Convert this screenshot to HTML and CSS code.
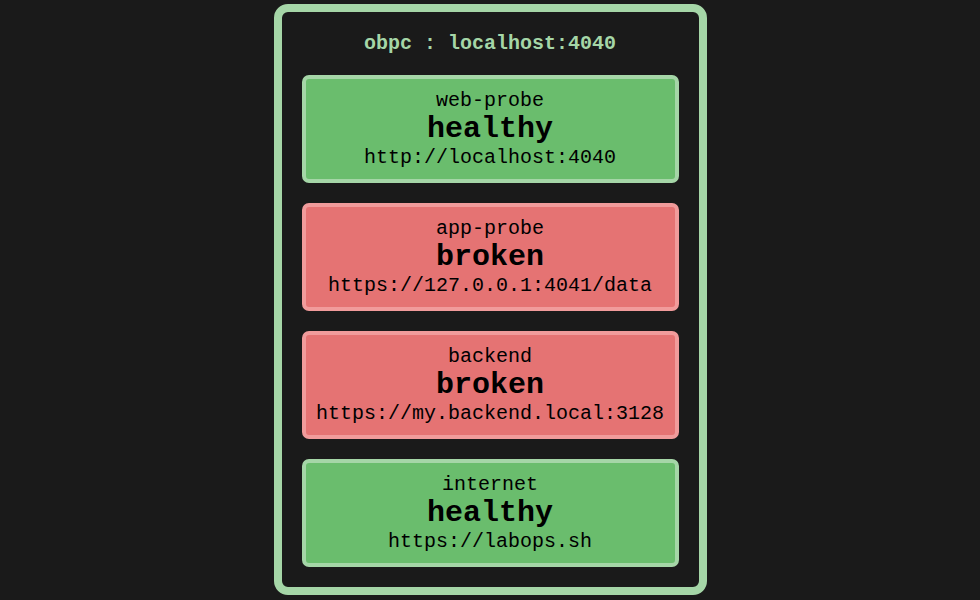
FILE: index.html
```html
<!DOCTYPE html>
<html>
<head>
<meta charset="utf-8">
<link rel="stylesheet" href="styles.css">
</head>
<body>
<main class="panel">
  <h1 class="title">obpc : localhost:4040</h1>
  <div class="card ok">
    <div class="name">web-probe</div>
    <div class="status">healthy</div>
    <div class="url">http://localhost:4040</div>
  </div>
  <div class="card bad">
    <div class="name">app-probe</div>
    <div class="status">broken</div>
    <div class="url">https://127.0.0.1:4041/data</div>
  </div>
  <div class="card bad">
    <div class="name">backend</div>
    <div class="status">broken</div>
    <div class="url">https://my.backend.local:3128</div>
  </div>
  <div class="card ok">
    <div class="name">internet</div>
    <div class="status">healthy</div>
    <div class="url">https://labops.sh</div>
  </div>
</main>
</body>
</html>
```
FILE: styles.css
```css
html, body {
  margin: 0;
  background: #1a1a1a;
}
body {
  padding-top: 4px;
  font-family: "Liberation Mono", "DejaVu Sans Mono", monospace;
}
.panel {
  width: 377px;
  margin: 0 auto;
  border: 8px solid #a5d6a7;
  border-radius: 14px;
  padding: 20px;
  display: flex;
  flex-direction: column;
  gap: 20px;
  background: #1a1a1a;
}
.title {
  margin: 0;
  font-size: 20px;
  line-height: 23px;
  font-weight: bold;
  color: #a5d6a7;
  text-align: center;
}
.card {
  border: 4px solid;
  border-radius: 7px;
  padding: 10px 0;
  text-align: center;
  color: #000;
}
.ok {
  background: #6abd6d;
  border-color: #a5d6a7;
}
.bad {
  background: #e57373;
  border-color: #f19b9b;
}
.name, .url {
  font-size: 20px;
  line-height: 23px;
}
.status {
  font-size: 30px;
  line-height: 34px;
  font-weight: bold;
}
```
